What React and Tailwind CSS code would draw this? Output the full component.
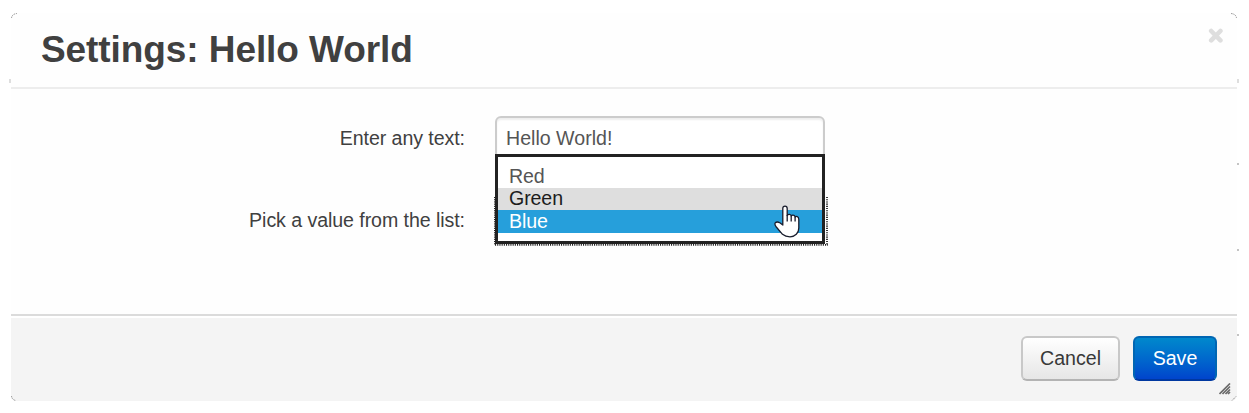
import React from 'react';

const options = [
  { label: 'Red', row: 'h-[23px] leading-[22px] text-[#555]' },
  { label: 'Green', row: 'h-[22px] bg-[#dedede] leading-[20px] text-[#1c1c1c]' },
  { label: 'Blue', row: 'h-[23px] bg-[#269fdb] leading-[22px] text-white' },
];

function Pointer() {
  return (
    <svg className="absolute left-[276px] top-[48px] h-[33px] w-[28px]" viewBox="0 0 28 33">
      <path
        d="M8.8 20 V3.6 Q8.8 1.2 11 1.2 T13.2 3.6 V10.5 Q13.8 9.2 15.4 9.4 Q17 9.6 17.2 11 Q18 9.8 19.4 10.2 Q20.9 10.5 21.1 12 Q22 11.1 23.3 11.6 Q24.8 12.2 24.8 14.5 V23 Q24.8 27 22.3 29.3 Q19.8 31.8 16 31.8 Q11.5 31.8 8.5 29.3 L2.3 22 Q0.2 19.2 1.3 17.8 Q3 16.2 5.8 17.8 Z"
        fill="#fff" stroke="#191c2c" strokeWidth="1.3" strokeLinejoin="round"
      />
      <path d="M13.2 10 V16.5 M17.2 11 V16.5 M21.1 12 V16.5" fill="none" stroke="#191c2c" strokeWidth="1.3" />
    </svg>
  );
}

function Header() {
  return (
    <header className="flex h-[76px] items-start justify-between rounded-t-[6px] border-b-2 border-[#ededed] pl-[30px] pr-[13px]">
      <h1 className="pt-[15px] text-[37px] font-bold leading-[44px] tracking-[-0.08px] text-[#404040]">Settings: Hello World</h1>
      <button className="mt-[15px] h-[16px] w-[16px]" aria-label="Close">
        <svg viewBox="0 0 16 16" className="h-full w-full">
          <path d="M3.2 3 L12.4 12.4 M12.4 3 L3.2 12.4" stroke="#dedede" strokeWidth="4.6" strokeLinecap="round" />
        </svg>
      </button>
    </header>
  );
}

function Footer() {
  return (
    <footer className="flex h-[87px] justify-end gap-[13px] rounded-b-[6px] border-t-2 border-[#dbdbdb] bg-[#f4f4f4] pr-5 pt-[20px] text-[19.6px] shadow-[inset_0_2px_0_#fff]">
      <button className="h-[45px] w-[99px] rounded-[6px] border-2 border-[#c8c8c8] border-b-[#b3b3b3] bg-gradient-to-b from-white to-[#e6e6e6] leading-[41px] text-[#383838]">Cancel</button>
      <button className="h-[45px] w-[84px] rounded-[6px] border-2 border-[#0066b3] border-b-[#0038a0] bg-gradient-to-b from-[#0088cc] to-[#0044cc] leading-[41px] text-white">Save</button>
    </footer>
  );
}

export default function App() {
  return (
    <div className="relative h-[413px] w-[1249px] overflow-hidden bg-white pl-[11px] pt-[13px] font-['Liberation_Sans',Arial,sans-serif]">
      <main className="relative flex h-[388px] w-[1226px] flex-col rounded-[6px] bg-[#fefefe]">
        <Header />
        <section className="h-[225px] pt-[27px] text-[19.6px] text-[#404040]">
          <div className="flex h-[45px] items-center">
            <label className="w-[454px] text-right tracking-[-0.07px]">Enter any text:</label>
            <div className="relative ml-[30px] h-[45px] w-[330px] rounded-[6px] border-2 border-[#ccc] bg-white px-[9px] leading-[40px] text-[#555] shadow-[inset_0_2px_2px_rgba(0,0,0,0.07)]">
              Hello World!
              <svg className="absolute left-[-3px] top-[79px] h-[50px] w-[335px]" viewBox="0 0 335 50" fill="none" stroke="#222" strokeDasharray="1.1 1.1">
                <path d="M0.5 0 V48" />
                <path d="M333 0 V48 M1 47.8 H334" strokeWidth="1.8" />
              </svg>
              <ul className="absolute left-[-2px] top-[36px] h-[90px] w-[330px] border-[3px] border-[#222] bg-white pt-[8px] tracking-[-0.1px]">
                {options.map((option) => (
                  <li key={option.label} className={'pl-[11px] ' + option.row}>{option.label}</li>
                ))}
                <li className="list-none"><Pointer /></li>
              </ul>
            </div>
          </div>
          <div className="mt-[37px] flex h-[45px] items-center">
            <label className="w-[454px] text-right tracking-[-0.07px]">Pick a value from the list:</label>
          </div>
        </section>
        <Footer />
        <svg className="absolute bottom-[6px] right-[6px] h-[12px] w-[12px]" viewBox="0 0 12 12">
          <path d="M0.5 11 L11 0.5 M3.5 11 L11 3.5 M6.5 11 L11 6.5 M9 11 L11 9" stroke="#6a6a6a" strokeWidth="1.7" />
        </svg>
      </main>
      <svg className="pointer-events-none absolute left-0 top-0 h-[413px] w-[1249px]" viewBox="0 0 1249 413" fill="none">
        <path d="M11.5 18 Q12 14 17 13.5 M1231 13.5 Q1236 14 1236.5 18 M11.5 396 Q12 400 16 400.5 M1232 400.5 L1236.5 396" stroke="#777" strokeWidth="0.8" strokeDasharray="1.4 0.8" />
        <path d="M9 79h2v4h-2z M1237 79h2v4h-2z" fill="#dedede" />
        <path d="M1237 163h2v2h-2z M1237 249h2v2h-2z M1237 334h2v2h-2z" fill="#c4c4c4" />
      </svg>
    </div>
  );
}
